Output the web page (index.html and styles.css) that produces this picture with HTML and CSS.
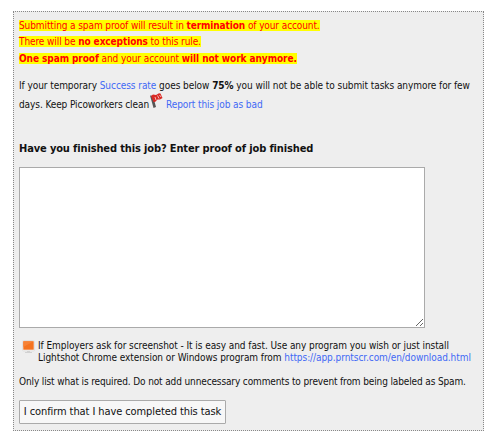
FILE: index.html
```html
<!DOCTYPE html>
<html lang="en">
<head>
    <meta charset="utf-8">
    <title>Submit proof</title>
    <link rel="stylesheet" href="styles.css">
</head>
<body>
    <div class="box">
        <div class="warning">
            <div><span class="w1">Submitting a spam proof will result in <b>termination</b> of your account.</span></div>
            <div><span class="w2">There will be <b>no exceptions</b> to this rule.</span></div>
            <div><span class="w3"><b>One spam proof</b> and your account <b>will not work anymore.</b></span></div>
        </div>

        <div class="rate">
            <div class="rate1">If your temporary <a href="#">Success rate</a> goes below <b>75%</b> you will not be able to submit tasks anymore for few</div>
            <div class="rate2">days. Keep Picoworkers clean<svg class="flag" width="15" height="16" viewBox="0 0 15 16">
                <path d="M1 2.5 L4.5 15 L7 14 L4 3 Z" fill="#555"/>
                <path d="M2 3 L4 1.5 L7 2 L10 0.3 L11.5 0.5 L13.5 5 L11 6.5 L8.5 6.5 L6 9 L4.5 9 Z" fill="#d92a25"/>
                <path d="M6 4 L7 7 M8.5 2.5 L10 5.5 M10.5 2 L12 4" stroke="#f6c5c0" stroke-width="0.9" fill="none"/>
            </svg><a href="#">Report this job as bad</a></div>
        </div>

        <h3>Have you finished this job? Enter proof of job finished</h3>
        <textarea></textarea>

        <div class="hint">
            <svg class="monitor" width="14" height="14" viewBox="0 0 14 14">
                <rect x="0.5" y="0.5" width="12" height="10.5" rx="1" fill="#f4f2f0" stroke="#e0e0e0"/>
                <rect x="1.3" y="1.3" width="10.4" height="8.4" fill="#f47320"/>
                <path d="M1.3 1.3 H11.7 L1.3 7 Z" fill="#f68236"/>
                <path d="M5 11 H8 V12 H10 V13 H3 V12 H5 Z" fill="#d2d2d2"/>
            </svg>
            <div>
                <div class="hint1">If Employers ask for screenshot - It is easy and fast. Use any program you wish or just install</div>
                <div class="hint2">Lightshot Chrome extension or Windows program from <a href="#">https://app.prntscr.com/en/download.html</a></div>
            </div>
        </div>

        <p class="only">Only list what is required. Do not add unnecessary comments to prevent from being labeled as Spam.</p>
        <button>I confirm that I have completed this task</button>
    </div>
</body>
</html>
```
FILE: styles.css
```css
body{
    margin: 0;
    background-color: #fff;
    color: #111;
    font-family: "DejaVu Sans Condensed", "DejaVu Sans", sans-serif;
    font-stretch: condensed;
    font-size: 10px;
    letter-spacing: -0.065px;
    white-space: nowrap;
}
.box{
    box-sizing: border-box;
    width: 471px;
    height: 420px;
    margin: 11px 0 0 13px;
    padding: 6px 5px;
    background-color: #eee;
    border: 1px dotted #888;
}
a{
    color: #4169f5;
    text-decoration: none;
}
.warning{
    color: #f00;
    line-height: 16.3px;
}
.warning span{
    background-color: #ff0;
}
.w1{
    letter-spacing: -0.1px;
}
.w2{
    letter-spacing: -0.09px;
}
.w3{
    letter-spacing: -0.075px;
}
.rate{
    margin-top: 9px;
    line-height: 19px;
}
.rate2{
    letter-spacing: -0.09px;
}
.flag{
    margin: -6px 2px 0 0;
    vertical-align: -1px;
}
h3{
    margin: 27px 0 0;
    font-size: 11px;
    line-height: 16px;
    letter-spacing: -0.135px;
}
textarea{
    display: block;
    box-sizing: border-box;
    width: 406px;
    height: 161px;
    margin: 10px 0 0;
    border: 1px solid #aaa;
    border-radius: 0;
    background-color: #fff;
}
.hint{
    display: flex;
    margin-top: 12px;
    line-height: 12px;
}
.monitor{
    margin: 0 2px 0 3px;
}
.only{
    margin: 12px 0 0;
    line-height: 12px;
    letter-spacing: -0.13px;
}
button{
    display: block;
    box-sizing: border-box;
    width: 207px;
    height: 24px;
    margin-top: 12px;
    padding: 0;
    border: 1px solid #aaa;
    border-radius: 1px;
    background-color: #f7f7f7;
    color: #111;
    font-family: inherit;
    font-stretch: condensed;
    font-size: 11px;
    letter-spacing: -0.09px;
}
```
